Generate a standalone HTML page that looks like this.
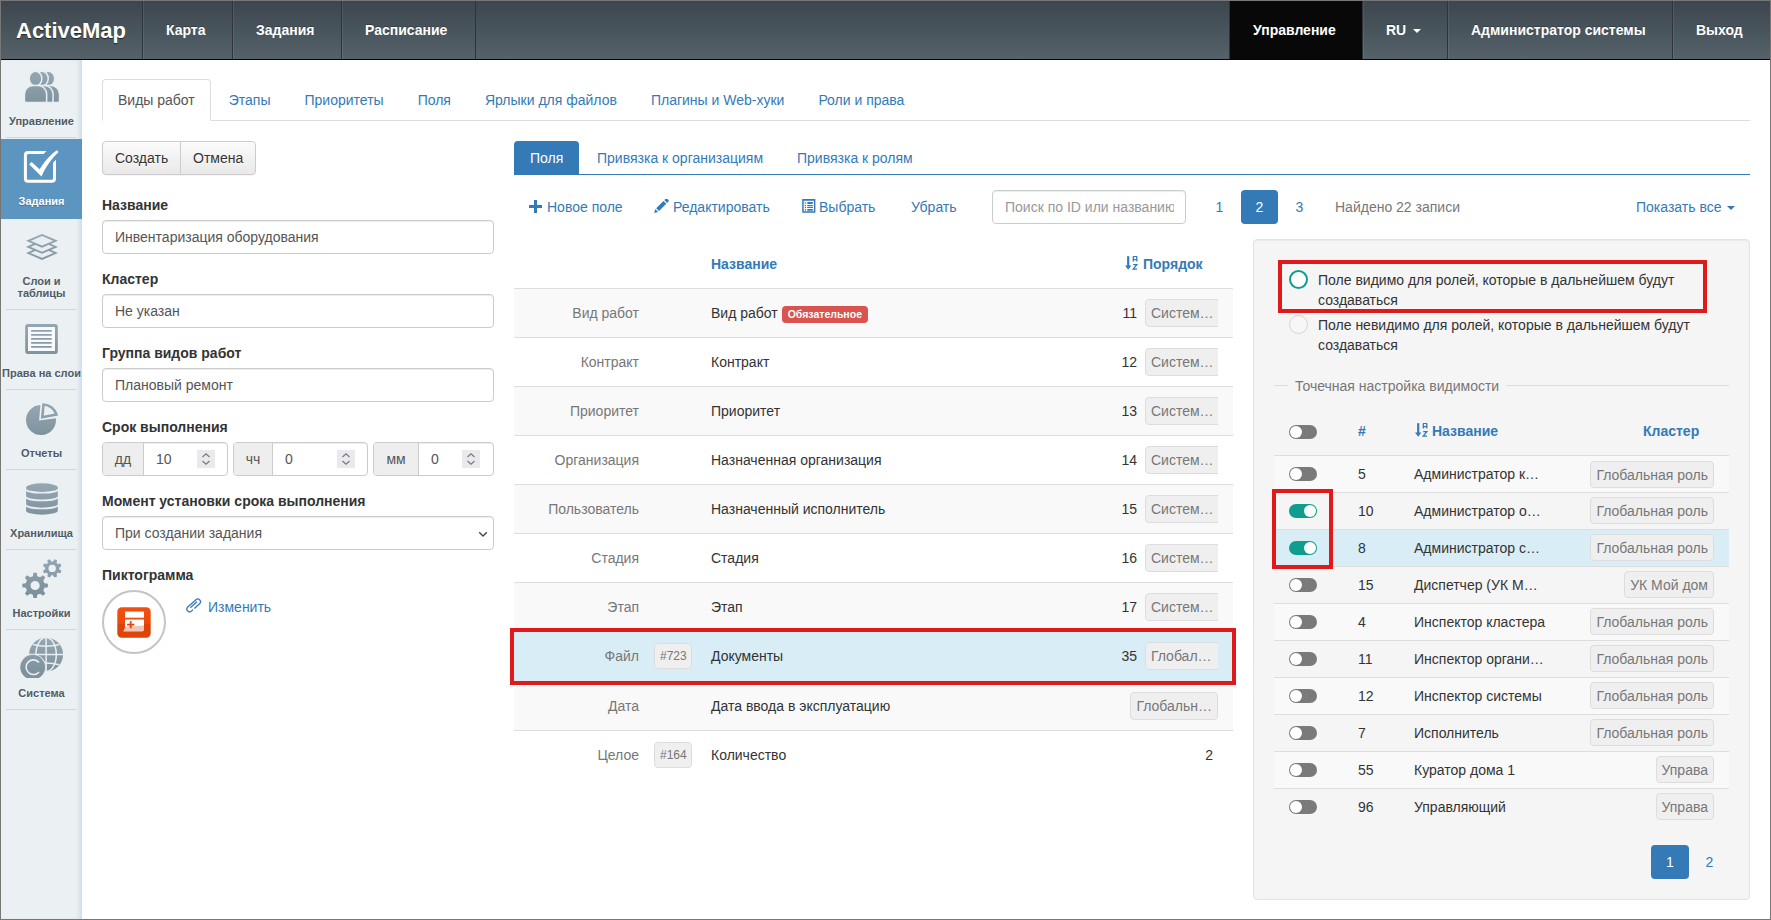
<!DOCTYPE html>
<html><head><meta charset="utf-8">
<style>
*{box-sizing:border-box;margin:0;padding:0}
html,body{width:1771px;height:920px;overflow:hidden;background:#fff}
body{font-family:"Liberation Sans",sans-serif;font-size:14px;line-height:20px;color:#333;position:relative}
.frame{position:absolute;left:0;top:0;width:1771px;height:920px;border:1px solid #777;z-index:50;pointer-events:none}
a{color:#337ab7;text-decoration:none}
/* navbar */
.nav{position:absolute;left:1px;top:1px;width:1769px;height:59px;background:linear-gradient(#3b464e,#566269);border-bottom:1px solid #050505;color:#fff;font-weight:bold}
.nav .brand{position:absolute;left:0;top:1px;width:141px;font-size:22px;line-height:58px;padding-left:15px;text-shadow:0 1px 1px rgba(0,0,0,.6);letter-spacing:0}
.nav .it{position:absolute;top:0;text-align:left;height:58px;line-height:58px;padding:0 0 0 23px;border-left:1px solid #2c353b;box-shadow:inset 1px 0 0 rgba(255,255,255,.08);white-space:nowrap;text-shadow:0 -1px 0 rgba(0,0,0,.25)}
.nav .sp{flex:1}
.nav .act{background:#080808;box-shadow:none;border-left-color:#2c353b}
.caret{display:inline-block;width:0;height:0;border-top:4px solid;border-left:4px solid transparent;border-right:4px solid transparent;vertical-align:middle;margin-left:4px}
/* sidebar */
.side{position:absolute;left:1px;top:60px;width:81px;height:859px;background:#ebf0f3;box-shadow:inset -4px 0 4px -2px rgba(150,188,208,.45)}
.si{position:absolute;left:0;width:81px;text-align:center;font-size:11px;font-weight:bold;line-height:12px;color:#505c66}
.si svg{display:block;margin:0 auto}
.si .lb{position:absolute;left:0;width:81px;text-align:center}
.sep{position:absolute;left:5px;width:70px;height:1px;background:#c8d9e2}
.si.act{background:#5d95c1;color:#fff}
.lbl{position:absolute;left:1px;width:81px;text-align:center;font-size:11px;font-weight:bold;line-height:12px;color:#4f5b65;text-shadow:0 1px 0 rgba(255,255,255,.5)}
.lbl.w{color:#fff;text-shadow:0 1px 1px rgba(0,0,0,.25)}

/* main */
.main{position:absolute;left:82px;top:60px;width:1688px;height:859px}
.tabs{position:absolute;left:20px;top:19px;width:1648px;height:42px;border-bottom:1px solid #ddd;display:flex}
.tabs a{display:block;padding:10px 15px;line-height:20px;border:1px solid transparent;border-radius:4px 4px 0 0;margin-right:2px;height:42px}
.tabs a.on{color:#555;border-color:#ddd #ddd transparent;background:#fff}
.btn{display:inline-block;padding:6px 12px;line-height:20px;border:1px solid #ccc;color:#333;background:linear-gradient(#fbfbfb,#e9e9e9);box-shadow:inset 0 1px 0 rgba(255,255,255,.9),0 1px 1px rgba(0,0,0,.04);text-shadow:0 1px 0 #fff;height:34px}
.lft{position:absolute;left:20px;top:81px;width:392px}
.lab{font-weight:bold;line-height:20px;margin-bottom:5px;color:#333}
.fc{height:34px;border:1px solid #ccc;border-radius:4px;padding:6px 12px;line-height:20px;color:#555;box-shadow:inset 0 1px 1px rgba(0,0,0,.075);background:#fff;margin-bottom:15px;white-space:nowrap;overflow:hidden}
.ig{position:absolute;top:0;height:34px;border:1px solid #ccc;border-radius:4px;display:flex;overflow:hidden;box-shadow:inset 0 1px 1px rgba(0,0,0,.075)}
.ig .ad{background:#eee;border-right:1px solid #ccc;text-align:center;line-height:32px;color:#555}
.ig .iv{position:relative;flex:1;padding-left:12px;line-height:32px;color:#555}
.spin{position:absolute;top:7px;width:18px;height:18px;background:#e9e9ee}

.R{position:absolute;left:0;top:0;width:1771px;height:920px}
.ab{position:absolute;white-space:nowrap}
.ptab{position:absolute;top:142px;height:33px;line-height:33px;color:#337ab7}
.tb{position:absolute;top:197px;line-height:20px;color:#337ab7;white-space:nowrap}
.pg{position:absolute;top:190px;width:37px;height:34px;line-height:34px;text-align:center;color:#337ab7}
.row{position:absolute;left:514px;width:719px;height:49px;border-top:1px solid #ddd}
.row .c{position:absolute;top:0;line-height:48px;white-space:nowrap}
.gb{position:absolute;height:28px;line-height:26px;border:1px solid #ddd;border-radius:4px;background:#efefef;color:#777;padding:0 5px;white-space:nowrap;overflow:hidden}
.clip{position:absolute;overflow:hidden}
.rb{position:absolute;border:4px solid #e0191b}
.well{position:absolute;left:1253px;top:239px;width:497px;height:661px;background:#f5f5f5;border:1px solid #e3e3e3;border-radius:4px;box-shadow:inset 0 1px 1px rgba(0,0,0,.05)}
.rr{position:absolute;left:1274px;width:455px;height:37px;border-top:1px solid #ddd}
.rr .c{position:absolute;top:0;line-height:36px;white-space:nowrap}
.tg{position:absolute;width:28px;height:14px;border-radius:7px;background:#7a7a7a}
.tg:after{content:"";position:absolute;left:1px;top:1px;width:12px;height:12px;border-radius:50%;background:#fff}
.tg.on{background:#0f9d8e}
.tg.on:after{left:15px}
</style></head><body>
<div class="frame"></div>
<div class="nav">
  <div class="brand">ActiveMap</div>
  <div class="it" style="left:141px;width:91px">Карта</div>
  <div class="it" style="left:231px;width:110px">Задания</div>
  <div class="it" style="left:340px;width:135px;border-right:1px solid #2c353b">Расписание</div>
  <div class="it act" style="left:1228px;width:134px">Управление</div>
  <div class="it" style="left:1361px;width:86px">RU<span class="caret" style="margin-left:7px"></span></div>
  <div class="it" style="left:1446px;width:226px">Администратор системы</div>
  <div class="it" style="left:1671px;width:98px">Выход</div>
</div>
<div class="side">
 <div class="sep" style="top:77px"></div>
 <div class="si act" style="top:79px;height:80px"></div>
 <div class="sep" style="top:249px"></div>
 <div class="sep" style="top:329px"></div>
 <div class="sep" style="top:409px"></div>
 <div class="sep" style="top:489px"></div>
 <div class="sep" style="top:569px"></div>
 <div class="sep" style="top:649px"></div>
</div>
<!-- sidebar icons (page coords) -->
<svg width="0" height="0" style="position:absolute"><defs><linearGradient id="ig" gradientUnits="userSpaceOnUse" x1="0" y1="5" x2="0" y2="38"><stop offset="0" stop-color="#95a7b2"/><stop offset="1" stop-color="#7e929d"/></linearGradient></defs></svg>

<svg style="position:absolute;left:20px;top:66px" width="44" height="40" viewBox="0 0 44 40">
 <g fill="url(#ig)" stroke="#e9eef2" stroke-width="3" paint-order="stroke">
  <g transform="translate(12.9,0)"><ellipse cx="15.5" cy="12.6" rx="5.6" ry="6.6"/><path d="M5.2 35V28.2A8 8 0 0 1 13.2 20.2H17.9A8 8 0 0 1 25.9 28.2V35Q25.9 35.7 25.2 35.7H5.9Q5.2 35.7 5.2 35Z"/></g>
  <g transform="translate(6.4,0)"><ellipse cx="15.5" cy="12.6" rx="5.6" ry="6.6"/><path d="M5.2 35V28.2A8 8 0 0 1 13.2 20.2H17.9A8 8 0 0 1 25.9 28.2V35Q25.9 35.7 25.2 35.7H5.9Q5.2 35.7 5.2 35Z"/></g>
  <g><ellipse cx="15.5" cy="12.6" rx="5.6" ry="6.6"/><path d="M5.2 35V28.2A8 8 0 0 1 13.2 20.2H17.9A8 8 0 0 1 25.9 28.2V35Q25.9 35.7 25.2 35.7H5.9Q5.2 35.7 5.2 35Z"/></g>
 </g>
</svg>
<svg style="position:absolute;left:20px;top:145px" width="44" height="40" viewBox="0 0 44 40">
 <path d="M26.6 5.9H8Q3.9 5.9 3.9 10V33.7Q3.9 37.8 8 37.8H31.9Q36 37.8 36 33.7V14.7L33 17.7V33.3Q33 34.8 31.5 34.8H8.4Q6.9 34.8 6.9 33.3V10.4Q6.9 8.9 8.4 8.9H23.6Z" fill="#fff"/>
 <path d="M9.1 19.3L11.6 16.9L19.6 24.3C25 15.5 31 9 37 5.2L38.6 6.9C32 13 25.5 22 21.5 31.5Z" fill="#fff"/>
</svg>
<svg style="position:absolute;left:20px;top:228px" width="44" height="40" viewBox="0 0 44 40">
 <g fill="#e9eef2" stroke="url(#ig)" stroke-width="1.8" stroke-linejoin="miter">
  <path d="M8.3 25L22 19.1L35.7 25L22 30.9Z"/>
  <path d="M8.3 18.9L22 13L35.7 18.9L22 24.8Z"/>
  <path d="M8.3 12.8L22 6.9L35.7 12.8L22 18.7Z"/>
 </g>
</svg>
<svg style="position:absolute;left:20px;top:318px" width="44" height="40" viewBox="0 0 44 40">
 <rect x="6.6" y="7.5" width="29.8" height="27" rx="1.2" fill="#f7f9fa" stroke="url(#ig)" stroke-width="2.8"/>
 <g stroke="url(#ig)" stroke-width="1.8"><path d="M11.1 12.8H31.7M11.1 16.9H31.7M11.1 20.9H31.7M11.1 24.9H31.7M11.1 28.9H31.7"/></g>
</svg>
<svg style="position:absolute;left:20px;top:398px" width="44" height="40" viewBox="0 0 44 40">
 <path d="M20.4 7.1A15 15 0 1 0 35.9 20.3L19.1 22.4Z" fill="url(#ig)"/>
 <path d="M23.5 6.5A14 14 0 0 1 36.5 16.6L22.3 19.2Z" fill="none" stroke="url(#ig)" stroke-width="2.6" stroke-linejoin="miter"/>
</svg>
<svg style="position:absolute;left:20px;top:478px" width="44" height="40" viewBox="0 0 44 40">
 <path d="M6.1 9.5A15.9 4.5 0 0 1 37.8 9.5V33A15.9 4 0 0 1 6.1 33Z" fill="url(#ig)"/>
 <g fill="none" stroke="#e9eef2" stroke-width="1.7">
  <path d="M5.5 10.9A16.5 4.2 0 0 0 38.4 10.9"/>
  <path d="M5.5 18.7A16.5 4 0 0 0 38.4 18.7"/>
  <path d="M5.5 26.8A16.5 4 0 0 0 38.4 26.8"/>
 </g>
</svg>
<svg style="position:absolute;left:18px;top:553px" width="50" height="45" viewBox="0 0 50 45">
 <g fill="url(#ig)" fill-rule="evenodd">
  <path id="gbig" d="M26.43 30.25 L29.89 30.85 L29.89 34.15 L26.43 34.75 L25.29 37.51 L27.31 40.38 L24.98 42.71 L22.11 40.69 L19.35 41.83 L18.75 45.29 L15.45 45.29 L14.85 41.83 L12.09 40.69 L9.22 42.71 L6.89 40.38 L8.91 37.51 L7.77 34.75 L4.31 34.15 L4.31 30.85 L7.77 30.25 L8.91 27.49 L6.89 24.62 L9.22 22.29 L12.09 24.31 L14.85 23.17 L15.45 19.71 L18.75 19.71 L19.35 23.17 L22.11 24.31 L24.98 22.29 L27.31 24.62 L25.29 27.49Z M21.70 32.50 A4.60 4.60 0 1 0 12.50 32.50 A4.60 4.60 0 1 0 21.70 32.50 Z"/>
  <path d="M41.16 16.17 L43.40 17.75 L42.37 20.25 L39.66 19.77 L38.57 20.86 L39.05 23.57 L36.55 24.60 L34.97 22.36 L33.43 22.36 L31.85 24.60 L29.35 23.57 L29.83 20.86 L28.74 19.77 L26.03 20.25 L25.00 17.75 L27.24 16.17 L27.24 14.63 L25.00 13.05 L26.03 10.55 L28.74 11.03 L29.83 9.94 L29.35 7.23 L31.85 6.20 L33.43 8.44 L34.97 8.44 L36.55 6.20 L39.05 7.23 L38.57 9.94 L39.66 11.03 L42.37 10.55 L43.40 13.05 L41.16 14.63Z M37.90 15.40 A3.70 3.70 0 1 0 30.50 15.40 A3.70 3.70 0 1 0 37.90 15.40 Z"/>
 </g>
</svg>
<svg style="position:absolute;left:18px;top:633px" width="50" height="45" viewBox="0 0 50 45">
 <circle cx="28.1" cy="21.6" r="17" fill="url(#ig)"/>
 <g fill="none" stroke="#e9eef2" stroke-width="1.5">
  <path d="M28.1 4.6V38.6M11.1 21.6H45.1"/>
  <ellipse cx="28.1" cy="21.6" rx="10.2" ry="17"/>
  <path d="M15 11.5Q28.1 15 41.2 11.5M15 31.7Q28.1 28.2 41.2 31.7"/>
 </g>
 <circle cx="14.7" cy="34.2" r="13.2" fill="#e9eef2"/>
 <circle cx="14.7" cy="34.2" r="12.4" fill="url(#ig)"/>
 <path d="M21 29.5A7.3 7.3 0 1 0 21 38.9" fill="none" stroke="#e9eef2" stroke-width="1.6"/>
</svg>
<div class="lbl" style="top:115px">Управление</div>
<div class="lbl w" style="top:195px">Задания</div>
<div class="lbl" style="top:275px">Слои и<br>таблицы</div>
<div class="lbl" style="top:367px">Права на слои</div>
<div class="lbl" style="top:447px">Отчеты</div>
<div class="lbl" style="top:527px">Хранилища</div>
<div class="lbl" style="top:607px">Настройки</div>
<div class="lbl" style="top:687px">Система</div>

<div class="main">
 <div class="tabs">
  <a class="on">Виды работ</a><a>Этапы</a><a>Приоритеты</a><a>Поля</a><a>Ярлыки для файлов</a><a>Плагины и Web-хуки</a><a>Роли и права</a>
 </div>
 <div class="lft">
  <div style="margin-top:0;height:54px;display:flex">
   <span class="btn" style="border-radius:4px 0 0 4px;width:79px">Создать</span><span class="btn" style="border-radius:0 4px 4px 0;margin-left:-1px;width:76px">Отмена</span>
  </div>
  <div class="lab">Название</div>
  <div class="fc">Инвентаризация оборудования</div>
  <div class="lab">Кластер</div>
  <div class="fc">Не указан</div>
  <div class="lab">Группа видов работ</div>
  <div class="fc">Плановый ремонт</div>
  <div class="lab">Срок выполнения</div>
  <div style="position:relative;height:49px">
   <div class="ig" style="left:0;width:126px"><div class="ad" style="width:41px">дд</div><div class="iv">10<span class="spin" style="left:53px"><svg width="18" height="18" viewBox="0 0 18 18" style="display:block"><path d="M5.5 7L9 3.8L12.5 7M5.5 11L9 14.2L12.5 11" fill="none" stroke="#777" stroke-width="1.1"/></svg></span></div></div>
   <div class="ig" style="left:131px;width:135px"><div class="ad" style="width:39px">чч</div><div class="iv">0<span class="spin" style="left:64px"><svg width="18" height="18" viewBox="0 0 18 18" style="display:block"><path d="M5.5 7L9 3.8L12.5 7M5.5 11L9 14.2L12.5 11" fill="none" stroke="#777" stroke-width="1.1"/></svg></span></div></div>
   <div class="ig" style="left:271px;width:121px"><div class="ad" style="width:45px">мм</div><div class="iv">0<span class="spin" style="left:43px"><svg width="18" height="18" viewBox="0 0 18 18" style="display:block"><path d="M5.5 7L9 3.8L12.5 7M5.5 11L9 14.2L12.5 11" fill="none" stroke="#777" stroke-width="1.1"/></svg></span></div></div>
  </div>
  <div class="lab">Момент установки срока выполнения</div>
  <div class="fc" style="position:relative">При создании задания<svg style="position:absolute;right:5px;top:14px" width="10" height="7" viewBox="0 0 10 7"><path d="M1.2 1.3L5 5L8.8 1.3" fill="none" stroke="#444" stroke-width="1.4"/></svg></div>
  <div class="lab">Пиктограмма</div>
  <div style="position:relative;height:80px">
   <div style="position:absolute;left:0;top:0;width:64px;height:64px;border-radius:50%;border:2px solid #c4c4c4;background:#fff"></div>
   <svg style="position:absolute;left:15px;top:17px" width="34" height="31" viewBox="0 0 34 31">
    <defs><linearGradient id="og" x1="0" y1="0" x2="0" y2="1"><stop offset="0" stop-color="#f2500f"/><stop offset="0.55" stop-color="#ea4a0c"/><stop offset="0.56" stop-color="#dc420a"/><stop offset="1" stop-color="#e0440b"/></linearGradient></defs>
    <rect x="0.3" y="0.2" width="33.4" height="30.6" rx="4.5" fill="url(#og)"/>
    <path d="M8 4.6H27V10.7H8Z" fill="#fff"/>
    <path d="M8 12.4H27V21.5C27 23 26.5 24.3 25.3 24.3H6.2C7.4 23.4 8 22 8 20Z" fill="#fff"/>
    <path d="M8 19.5L27 18.6V21.5C27 23 26.5 24.3 25.3 24.3H6.2C7.4 23.4 8 22 8 20Z" fill="#f3c6b3"/>
    <path d="M13.7 14V21.2M10.1 17.6H17.3" stroke="#e8400c" stroke-width="1.7"/>
   </svg>
   <svg style="position:absolute;left:83px;top:8px" width="18" height="15" viewBox="0 0 18 15">
    <g transform="translate(8.6,7.5) rotate(-42)" fill="none" stroke="#337ab7" stroke-width="1.3" stroke-linecap="round">
     <path d="M-1 2.7H5.6A2.7 2.7 0 0 0 5.6 -2.7H-5.4A2.7 2.7 0 0 0 -5.4 2.7H-3.8"/>
     <path d="M-3.2 -0.6H4.6"/>
    </g>
   </svg>
   <a style="position:absolute;left:106px;top:7px;line-height:20px">Изменить</a>
  </div>
 </div>
</div>
<div class="R">
<div class="ab" style="left:514px;top:141px;width:65px;height:33px;background:#337ab7;border-radius:4px 4px 0 0;color:#fff;line-height:35px;padding-left:16px">Поля</div>
<div class="ab" style="left:514px;top:174px;width:1236px;height:1px;background:#337ab7"></div>
<div class="ptab" style="left:597px">Привязка к организациям</div>
<div class="ptab" style="left:797px">Привязка к ролям</div>
<svg class="ab" style="left:529px;top:200px" width="13" height="13" viewBox="0 0 13 13"><path d="M6.5 0V13M0 6.5H13" stroke="#337ab7" stroke-width="3"/></svg><div class="tb" style="left:547px">Новое поле</div>
<svg class="ab" style="left:654px;top:199px" width="16" height="15" viewBox="0 0 16 15"><g transform="translate(0.2,14) rotate(-45)" fill="#337ab7"><path d="M0 0L3.5 -2V2Z"/><rect x="4.8" y="-2" width="10.3" height="4"/><path d="M16.3 -2H18.2Q19.3 -2 19.3 -0.9V0.9Q19.3 2 18.2 2H16.3Z"/></g></svg><div class="tb" style="left:673px">Редактировать</div>
<svg class="ab" style="left:802px;top:199px" width="14" height="14" viewBox="0 0 14 14"><path fill="#337ab7" fill-rule="evenodd" d="M0.2 0H13.4V13.8H0.2ZM1.7 1.8V12.3H11.9V1.8Z"/><g fill="#337ab7"><circle cx="3.4" cy="4" r="0.8"/><circle cx="3.4" cy="6.5" r="0.7"/><circle cx="3.4" cy="8.4" r="0.7"/><circle cx="3.4" cy="10.9" r="0.8"/><rect x="5.1" y="3.1" width="5.9" height="1.8" rx="0.8"/><rect x="5.1" y="5.9" width="5.9" height="1.2" rx="0.6"/><rect x="5.1" y="7.8" width="5.9" height="1.2" rx="0.6"/><rect x="5.1" y="10" width="5.9" height="1.8" rx="0.8"/></g></svg><div class="tb" style="left:819px">Выбрать</div>
<div class="tb" style="left:911px">Убрать</div>
<div class="ab" style="left:992px;top:190px;width:194px;height:34px;border:1px solid #ccc;border-radius:4px;box-shadow:inset 0 1px 1px rgba(0,0,0,.075);overflow:hidden;padding:0 12px;line-height:32px;color:#999"><div style="width:169px;overflow:hidden">Поиск по ID или названию</div></div>
<div class="pg" style="left:1201px">1</div><div class="pg" style="left:1241px;background:#337ab7;color:#fff;border-radius:4px">2</div><div class="pg" style="left:1281px">3</div>
<div class="tb" style="left:1335px;color:#777">Найдено 22 записи</div>
<div class="tb" style="left:1636px">Показать все <span class="caret" style="margin-left:2px;vertical-align:2px"></span></div>
<div class="ab" style="left:711px;top:254px;font-weight:bold;color:#337ab7;line-height:20px">Название</div>
<div class="ab" style="left:1125px;top:256px;width:14px;height:14px"><svg width="13" height="14" viewBox="0 0 13 14" style="position:absolute;left:0;top:0"><path d="M3.2 0.2V10.5" stroke="#337ab7" stroke-width="2.2"/><path d="M0 9.6H6.4L3.2 13.8Z" fill="#337ab7"/><path d="M8.3 5.6V1.2Q8.3 0.3 9.2 0.3H10.9Q11.8 0.3 11.8 1.2V5.6M8.3 3.6H11.8" fill="none" stroke="#337ab7" stroke-width="1.3"/><path d="M8.2 8.6H11.8L8.2 13.1H12" fill="none" stroke="#337ab7" stroke-width="1.3"/></svg></div><div class="ab" style="left:1143px;top:254px;font-weight:bold;color:#337ab7;line-height:20px">Порядок</div>
<div class="ab" style="left:514px;top:288px;width:719px;height:1px;background:#ddd"></div>
<div class="row" style="top:289px;height:48px;border-top:0;background:#f9f9f9"><div class="c" style="right:594px;color:#777">Вид работ</div><div class="c" style="left:197px;color:#333">Вид работ<span style="display:inline-block;margin-left:4px;height:17px;line-height:17px;padding:0 6px;background:#d9534f;color:#fff;border-radius:4px;font-size:10.5px;font-weight:bold;vertical-align:0px">Обязательное</span></div><div class="c" style="right:96px;color:#333">11</div><div class="clip" style="left:631px;top:10px;width:73px;height:28px"><div class="gb" style="left:0;top:0;width:90px">Систем…</div></div></div>
<div class="row" style="top:337px;background:#fff"><div class="c" style="right:594px;color:#777">Контракт</div><div class="c" style="left:197px;color:#333">Контракт</div><div class="c" style="right:96px;color:#333">12</div><div class="clip" style="left:631px;top:10px;width:73px;height:28px"><div class="gb" style="left:0;top:0;width:90px">Систем…</div></div></div>
<div class="row" style="top:386px;background:#f9f9f9"><div class="c" style="right:594px;color:#777">Приоритет</div><div class="c" style="left:197px;color:#333">Приоритет</div><div class="c" style="right:96px;color:#333">13</div><div class="clip" style="left:631px;top:10px;width:73px;height:28px"><div class="gb" style="left:0;top:0;width:90px">Систем…</div></div></div>
<div class="row" style="top:435px;background:#fff"><div class="c" style="right:594px;color:#777">Организация</div><div class="c" style="left:197px;color:#333">Назначенная организация</div><div class="c" style="right:96px;color:#333">14</div><div class="clip" style="left:631px;top:10px;width:73px;height:28px"><div class="gb" style="left:0;top:0;width:90px">Систем…</div></div></div>
<div class="row" style="top:484px;background:#f9f9f9"><div class="c" style="right:594px;color:#777">Пользователь</div><div class="c" style="left:197px;color:#333">Назначенный исполнитель</div><div class="c" style="right:96px;color:#333">15</div><div class="clip" style="left:631px;top:10px;width:73px;height:28px"><div class="gb" style="left:0;top:0;width:90px">Систем…</div></div></div>
<div class="row" style="top:533px;background:#fff"><div class="c" style="right:594px;color:#777">Стадия</div><div class="c" style="left:197px;color:#333">Стадия</div><div class="c" style="right:96px;color:#333">16</div><div class="clip" style="left:631px;top:10px;width:73px;height:28px"><div class="gb" style="left:0;top:0;width:90px">Систем…</div></div></div>
<div class="row" style="top:582px;background:#f9f9f9"><div class="c" style="right:594px;color:#777">Этап</div><div class="c" style="left:197px;color:#333">Этап</div><div class="c" style="right:96px;color:#333">17</div><div class="clip" style="left:631px;top:10px;width:73px;height:28px"><div class="gb" style="left:0;top:0;width:90px">Систем…</div></div></div>
<div class="row" style="top:631px;height:50px;background:#d9edf7"><div class="c" style="right:594px;color:#777">Файл</div><div class="gb" style="left:140px;top:11px;height:26px;line-height:24px;padding:0 4px 0 5px;font-size:12px">#723</div><div class="c" style="left:197px;color:#333">Документы</div><div class="c" style="right:96px;color:#333">35</div><div class="clip" style="left:631px;top:10px;width:73px;height:28px"><div class="gb" style="left:0;top:0;width:90px">Глобал…</div></div></div>
<div class="row" style="top:681px;background:#f9f9f9"><div class="c" style="right:594px;color:#777">Дата</div><div class="c" style="left:197px;color:#333">Дата ввода в эксплуатацию</div><div class="gb" style="right:15px;top:10px">Глобальн…</div></div>
<div class="row" style="top:730px;background:#fff"><div class="c" style="right:594px;color:#777">Целое</div><div class="gb" style="left:140px;top:11px;height:26px;line-height:24px;padding:0 4px 0 5px;font-size:12px">#164</div><div class="c" style="left:197px;color:#333">Количество</div><div class="c" style="right:20px;color:#333">2</div></div>
<div class="rb" style="left:510px;top:628px;width:726px;height:57px"></div>
<div class="well"></div>
<div class="ab" style="left:1289.4px;top:270.4px;width:19px;height:19px;border-radius:50%;border:2.7px solid #0f9d8e;background:#fff"></div>
<div class="ab" style="left:1318px;top:270px;line-height:20px;color:#333">Поле видимо для ролей, которые в дальнейшем будут<br>создаваться</div>
<div class="ab" style="left:1289px;top:315px;width:19px;height:19px;border-radius:50%;border:1px solid #d5d5d5;background:#f7f7f7"></div>
<div class="ab" style="left:1318px;top:315px;line-height:20px;color:#333">Поле невидимо для ролей, которые в дальнейшем будут<br>создаваться</div>
<div class="rb" style="left:1278px;top:260px;width:429px;height:53px"></div>
<div class="ab" style="left:1274px;top:385px;width:14px;height:1px;background:#ddd"></div>
<div class="ab" style="left:1295px;top:376px;line-height:20px;color:#777">Точечная настройка видимости</div>
<div class="ab" style="left:1506px;top:385px;width:223px;height:1px;background:#ddd"></div>
<div class="tg" style="left:1289px;top:425px"></div>
<div class="ab" style="left:1358px;top:421px;line-height:20px;font-weight:bold;color:#337ab7">#</div>
<div class="ab" style="left:1415px;top:423px;width:14px;height:14px"><svg width="13" height="14" viewBox="0 0 13 14" style="position:absolute;left:0;top:0"><path d="M3.2 0.2V10.5" stroke="#337ab7" stroke-width="2.2"/><path d="M0 9.6H6.4L3.2 13.8Z" fill="#337ab7"/><path d="M8.3 5.6V1.2Q8.3 0.3 9.2 0.3H10.9Q11.8 0.3 11.8 1.2V5.6M8.3 3.6H11.8" fill="none" stroke="#337ab7" stroke-width="1.3"/><path d="M8.2 8.6H11.8L8.2 13.1H12" fill="none" stroke="#337ab7" stroke-width="1.3"/></svg></div><div class="ab" style="left:1432px;top:421px;line-height:20px;font-weight:bold;color:#337ab7">Название</div>
<div class="ab" style="left:1643px;top:421px;line-height:20px;font-weight:bold;color:#337ab7">Кластер</div>
<div class="ab" style="left:1274px;top:455px;width:455px;height:1px;background:#ddd"></div>
<div class="rr" style="top:456px;height:36px;border-top:0;background:#f9f9f9"><div class="tg" style="left:15px;top:11px"></div><div class="c" style="left:84px;line-height:37px;color:#333">5</div><div class="c" style="left:140px;line-height:37px;color:#333">Администратор к…</div><div class="gb" style="right:15px;top:5px;height:27px;line-height:26px">Глобальная роль</div></div>
<div class="rr" style="top:492px;background:transparent"><div class="tg on" style="left:15px;top:11px"></div><div class="c" style="left:84px;line-height:36px;color:#333">10</div><div class="c" style="left:140px;line-height:36px;color:#333">Администратор о…</div><div class="gb" style="right:15px;top:4px;height:27px;line-height:26px">Глобальная роль</div></div>
<div class="rr" style="top:529px;background:#d9edf7"><div class="tg on" style="left:15px;top:11px"></div><div class="c" style="left:84px;line-height:36px;color:#333">8</div><div class="c" style="left:140px;line-height:36px;color:#333">Администратор с…</div><div class="gb" style="right:15px;top:4px;height:27px;line-height:26px">Глобальная роль</div></div>
<div class="rr" style="top:566px;background:transparent"><div class="tg" style="left:15px;top:11px"></div><div class="c" style="left:84px;line-height:36px;color:#333">15</div><div class="c" style="left:140px;line-height:36px;color:#333">Диспетчер (УК М…</div><div class="gb" style="right:15px;top:4px;height:27px;line-height:26px">УК Мой дом</div></div>
<div class="rr" style="top:603px;background:#f9f9f9"><div class="tg" style="left:15px;top:11px"></div><div class="c" style="left:84px;line-height:36px;color:#333">4</div><div class="c" style="left:140px;line-height:36px;color:#333">Инспектор кластера</div><div class="gb" style="right:15px;top:4px;height:27px;line-height:26px">Глобальная роль</div></div>
<div class="rr" style="top:640px;background:transparent"><div class="tg" style="left:15px;top:11px"></div><div class="c" style="left:84px;line-height:36px;color:#333">11</div><div class="c" style="left:140px;line-height:36px;color:#333">Инспектор органи…</div><div class="gb" style="right:15px;top:4px;height:27px;line-height:26px">Глобальная роль</div></div>
<div class="rr" style="top:677px;background:#f9f9f9"><div class="tg" style="left:15px;top:11px"></div><div class="c" style="left:84px;line-height:36px;color:#333">12</div><div class="c" style="left:140px;line-height:36px;color:#333">Инспектор системы</div><div class="gb" style="right:15px;top:4px;height:27px;line-height:26px">Глобальная роль</div></div>
<div class="rr" style="top:714px;background:transparent"><div class="tg" style="left:15px;top:11px"></div><div class="c" style="left:84px;line-height:36px;color:#333">7</div><div class="c" style="left:140px;line-height:36px;color:#333">Исполнитель</div><div class="gb" style="right:15px;top:4px;height:27px;line-height:26px">Глобальная роль</div></div>
<div class="rr" style="top:751px;background:#f9f9f9"><div class="tg" style="left:15px;top:11px"></div><div class="c" style="left:84px;line-height:36px;color:#333">55</div><div class="c" style="left:140px;line-height:36px;color:#333">Куратор дома 1</div><div class="gb" style="right:15px;top:4px;height:27px;line-height:26px">Управа</div></div>
<div class="rr" style="top:788px;background:transparent"><div class="tg" style="left:15px;top:11px"></div><div class="c" style="left:84px;line-height:36px;color:#333">96</div><div class="c" style="left:140px;line-height:36px;color:#333">Управляющий</div><div class="gb" style="right:15px;top:4px;height:27px;line-height:26px">Управа</div></div>
<div class="rb" style="left:1272px;top:489px;width:61px;height:80px"></div>
<div class="pg" style="left:1651px;top:845px;width:38px;background:#337ab7;color:#fff;border-radius:4px">1</div><div class="pg" style="left:1691px;top:845px">2</div>
</div>
</body></html>
